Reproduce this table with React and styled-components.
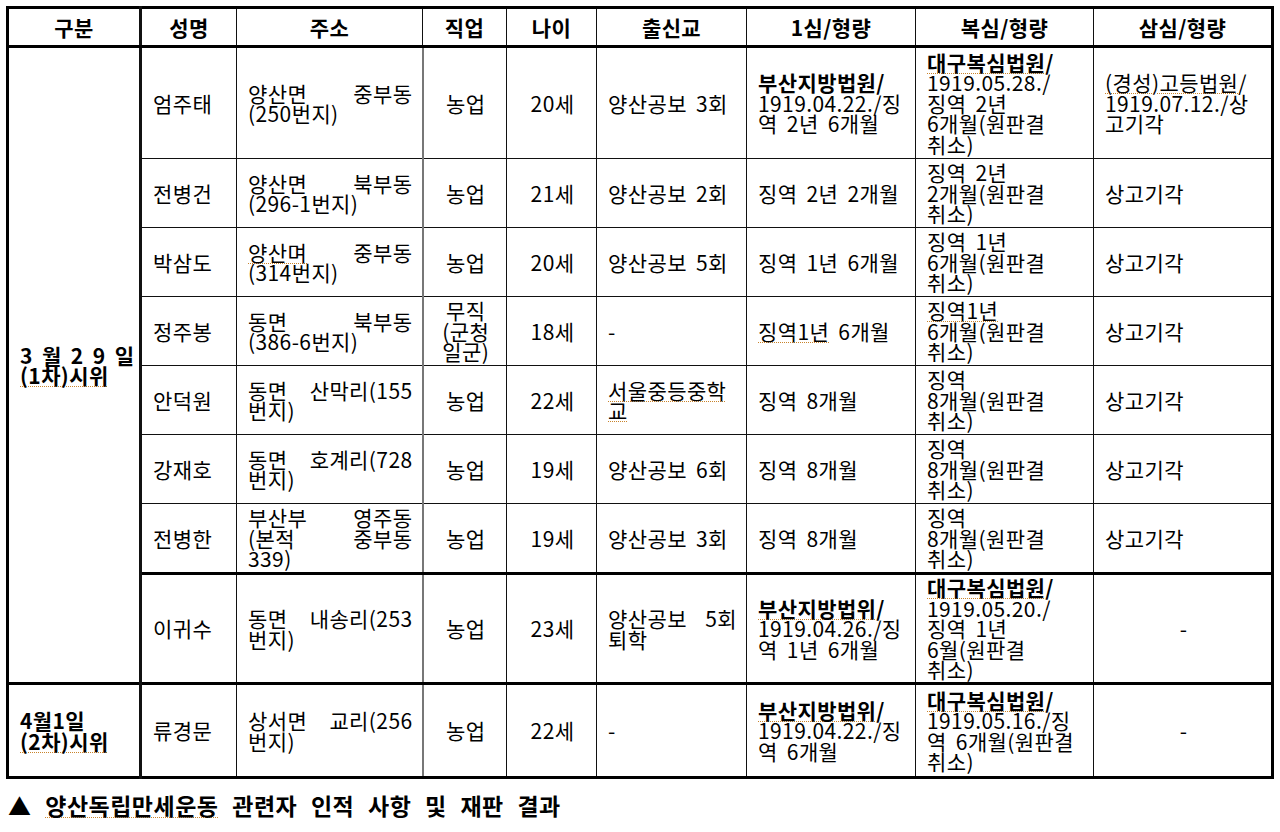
import React from 'react';
import styled, { createGlobalStyle } from 'styled-components';

const GlobalStyle = createGlobalStyle`
    html, body {
        margin: 0;
        padding: 0;
        background: #fff;
    }
    body {
        font-family: "Noto Sans CJK KR", "Noto Sans", sans-serif;
        color: #000;
    }
`;

const Page = styled.div`
    padding: 6px 0 0 6px;
    width: 1280px;
    height: 832px;
    box-sizing: border-box;
`;

const Table = styled.table`
    border-collapse: collapse;
    table-layout: fixed;
    width: 1265px;
    border: 3px solid #000;
    font-size: 21px;
    line-height: 20.5px;
    letter-spacing: 0.4px;
    word-spacing: 4px;
`;

const Col = styled.col`
    width: ${p => p.$w}px;
`;

const Th = styled.th`
    height: 36px;
    padding: 0;
    font-weight: 700;
    text-align: center;
    vertical-align: middle;
    border: 1px solid #111;
    border-bottom: 3px solid #000;
    border-left-width: ${p => p.$bl || 1}px;
    border-left-color: ${p => p.$gray ? '#777' : '#111'};
`;

const Td = styled.td`
    height: ${p => p.$h}px;
    padding: 0 9px 0 11px;
    text-align: ${p => p.$center ? 'center' : 'left'};
    vertical-align: middle;
    font-weight: ${p => p.$bold ? 700 : 400};
    border: 1px solid #111;
    border-left-width: ${p => p.$bl || 1}px;
    border-left-color: ${p => p.$gray ? '#777' : '#111'};
    border-top-width: ${p => p.$bt || 1}px;
    border-top-color: #000;
`;

const Line = styled.div`
    text-align: ${p => p.$j ? 'justify' : 'inherit'};
    text-align-last: ${p => p.$j ? 'justify' : 'auto'};
    white-space: nowrap;
`;

const Strong = styled.span`
    font-weight: 700;
`;

const Mark = styled.span`
    text-decoration: underline dotted #c9842c;
    text-decoration-thickness: 1px;
    text-underline-offset: 2px;
`;

const Caption = styled.div`
    margin-top: 13px;
    padding-left: 2px;
    font-size: 23px;
    line-height: 26px;
    font-weight: 700;
    letter-spacing: 0.5px;
    word-spacing: 8px;
`;

const Lines = ({ items }) => (
    <>
        {items.map((it, i) =>
            typeof it === 'string'
                ? <Line key={i}>{it}</Line>
                : <Line key={i} $j={it.j}>{it.c}</Line>
        )}
    </>
);

const widths = [133, 96, 186, 84, 90, 150, 169, 178, 179];
const heads = ['구분', '성명', '주소', '직업', '나이', '출신교', '1심/형량', '복심/형량', '삼심/형량'];

const rows = [
    {
        h: 110, name: '엄주태',
        addr: [{ j: true, c: '양산면 중부동' }, '(250번지)'],
        job: ['농업'], age: '20세', school: ['양산공보 3회'],
        first: [{ c: <Strong>부산지방법원/</Strong> }, '1919.04.22./징', '역 2년 6개월'],
        second: [{ c: <Strong><Mark>대구복심법원</Mark>/</Strong> }, '1919.05.28./', '징역 2년', '6개월(원판결', '취소)'],
        third: [{ c: <><Mark>(경성)고등법원</Mark>/</> }, '1919.07.12./상', '고기각'],
    },
    {
        h: 68, name: '전병건',
        addr: [{ j: true, c: '양산면 북부동' }, '(296-1번지)'],
        job: ['농업'], age: '21세', school: ['양산공보 2회'],
        first: ['징역 2년 2개월'],
        second: ['징역 2년', '2개월(원판결', '취소)'],
        third: ['상고기각'],
    },
    {
        h: 68, name: '박삼도',
        addr: [{ j: true, c: <><Mark>양산며</Mark> 중부동</> }, '(314번지)'],
        job: ['농업'], age: '20세', school: ['양산공보 5회'],
        first: ['징역 1년 6개월'],
        second: ['징역 1년', '6개월(원판결', '취소)'],
        third: ['상고기각'],
    },
    {
        h: 68, name: '정주봉',
        addr: [{ j: true, c: '동면 북부동' }, '(386-6번지)'],
        job: ['무직', '(군청', '일군)'], age: '18세', school: ['-'],
        first: [{ c: <><Mark>징역1년</Mark> 6개월</> }],
        second: [{ c: <Mark>징역1년</Mark> }, '6개월(원판결', '취소)'],
        third: ['상고기각'],
    },
    {
        h: 68, name: '안덕원',
        addr: [{ j: true, c: '동면 산막리(155' }, '번지)'],
        job: ['농업'], age: '22세', school: [{ c: <Mark>서울중등중학</Mark> }, { c: <Mark>교</Mark> }],
        first: ['징역 8개월'],
        second: ['징역', '8개월(원판결', '취소)'],
        third: ['상고기각'],
    },
    {
        h: 68, name: '강재호',
        addr: [{ j: true, c: '동면 호계리(728' }, '번지)'],
        job: ['농업'], age: '19세', school: ['양산공보 6회'],
        first: ['징역 8개월'],
        second: ['징역', '8개월(원판결', '취소)'],
        third: ['상고기각'],
    },
    {
        h: 68, name: '전병한',
        addr: [{ j: true, c: '부산부 영주동' }, { j: true, c: '(본적 중부동' }, '339)'],
        job: ['농업'], age: '19세', school: ['양산공보 3회'],
        first: ['징역 8개월'],
        second: ['징역', '8개월(원판결', '취소)'],
        third: ['상고기각'],
    },
    {
        h: 107, name: '이귀수', thick: true,
        addr: [{ j: true, c: '동면 내송리(253' }, '번지)'],
        job: ['농업'], age: '23세', school: [{ j: true, c: '양산공보 5회' }, '퇴학'],
        first: [{ c: <Strong><Mark>부산지방법위</Mark>/</Strong> }, '1919.04.26./징', '역 1년 6개월'],
        second: [{ c: <Strong><Mark>대구복심법원</Mark>/</Strong> }, '1919.05.20./', '징역 1년', '6월(원판결', '취소)'],
        third: ['-'], thirdCenter: true,
    },
    {
        h: 91, name: '류경문', thick: true,
        group: [{ c: '4월1일' }, { c: <Mark>(2차)시위</Mark> }],
        addr: [{ j: true, c: '상서면 교리(256' }, '번지)'],
        job: ['농업'], age: '22세', school: ['-'],
        first: [{ c: <Strong><Mark>부산지방법위</Mark>/</Strong> }, '1919.04.22./징', '역 6개월'],
        second: [{ c: <Strong><Mark>대구복심법원</Mark>/</Strong> }, '1919.05.16./징', '역 6개월(원판결', '취소)'],
        third: ['-'], thirdCenter: true,
    },
];

const App = () => (
    <Page>
        <GlobalStyle />
        <Table>
            <colgroup>
                {widths.map((w, i) => <Col key={i} $w={w} />)}
            </colgroup>
            <thead>
                <tr>
                    {heads.map((h, i) => (
                        <Th key={h} $bl={i === 1 ? 3 : 1} $gray={i === 3}>{h}</Th>
                    ))}
                </tr>
            </thead>
            <tbody>
                {rows.map((r, i) => (
                    <tr key={r.name}>
                        {i === 0 && (
                            <Td rowSpan={8} $bold>
                                <Lines items={[{ j: true, c: '3 월 2 9 일' }, { c: <Mark>(1차)시위</Mark> }]} />
                            </Td>
                        )}
                        {r.group && (
                            <Td $h={r.h} $bold $bt={3}>
                                <Lines items={r.group} />
                            </Td>
                        )}
                        <Td $h={r.h} $bl={3} $bt={r.thick ? 3 : 1}>{r.name}</Td>
                        <Td $bt={r.thick ? 3 : 1}><Lines items={r.addr} /></Td>
                        <Td $center $gray $bl={2} $bt={r.thick ? 3 : 1}><Lines items={r.job} /></Td>
                        <Td $center $bt={r.thick ? 3 : 1}>{r.age}</Td>
                        <Td $bt={r.thick ? 3 : 1}><Lines items={r.school} /></Td>
                        <Td $bt={r.thick ? 3 : 1}><Lines items={r.first} /></Td>
                        <Td $bt={r.thick ? 3 : 1}><Lines items={r.second} /></Td>
                        <Td $center={r.thirdCenter} $bt={r.thick ? 3 : 1}><Lines items={r.third} /></Td>
                    </tr>
                ))}
            </tbody>
        </Table>
        <Caption>
            ▲ <Mark>양산독립만세운동</Mark> 관련자 인적 사항 및 재판 결과
        </Caption>
    </Page>
);

export default App;
